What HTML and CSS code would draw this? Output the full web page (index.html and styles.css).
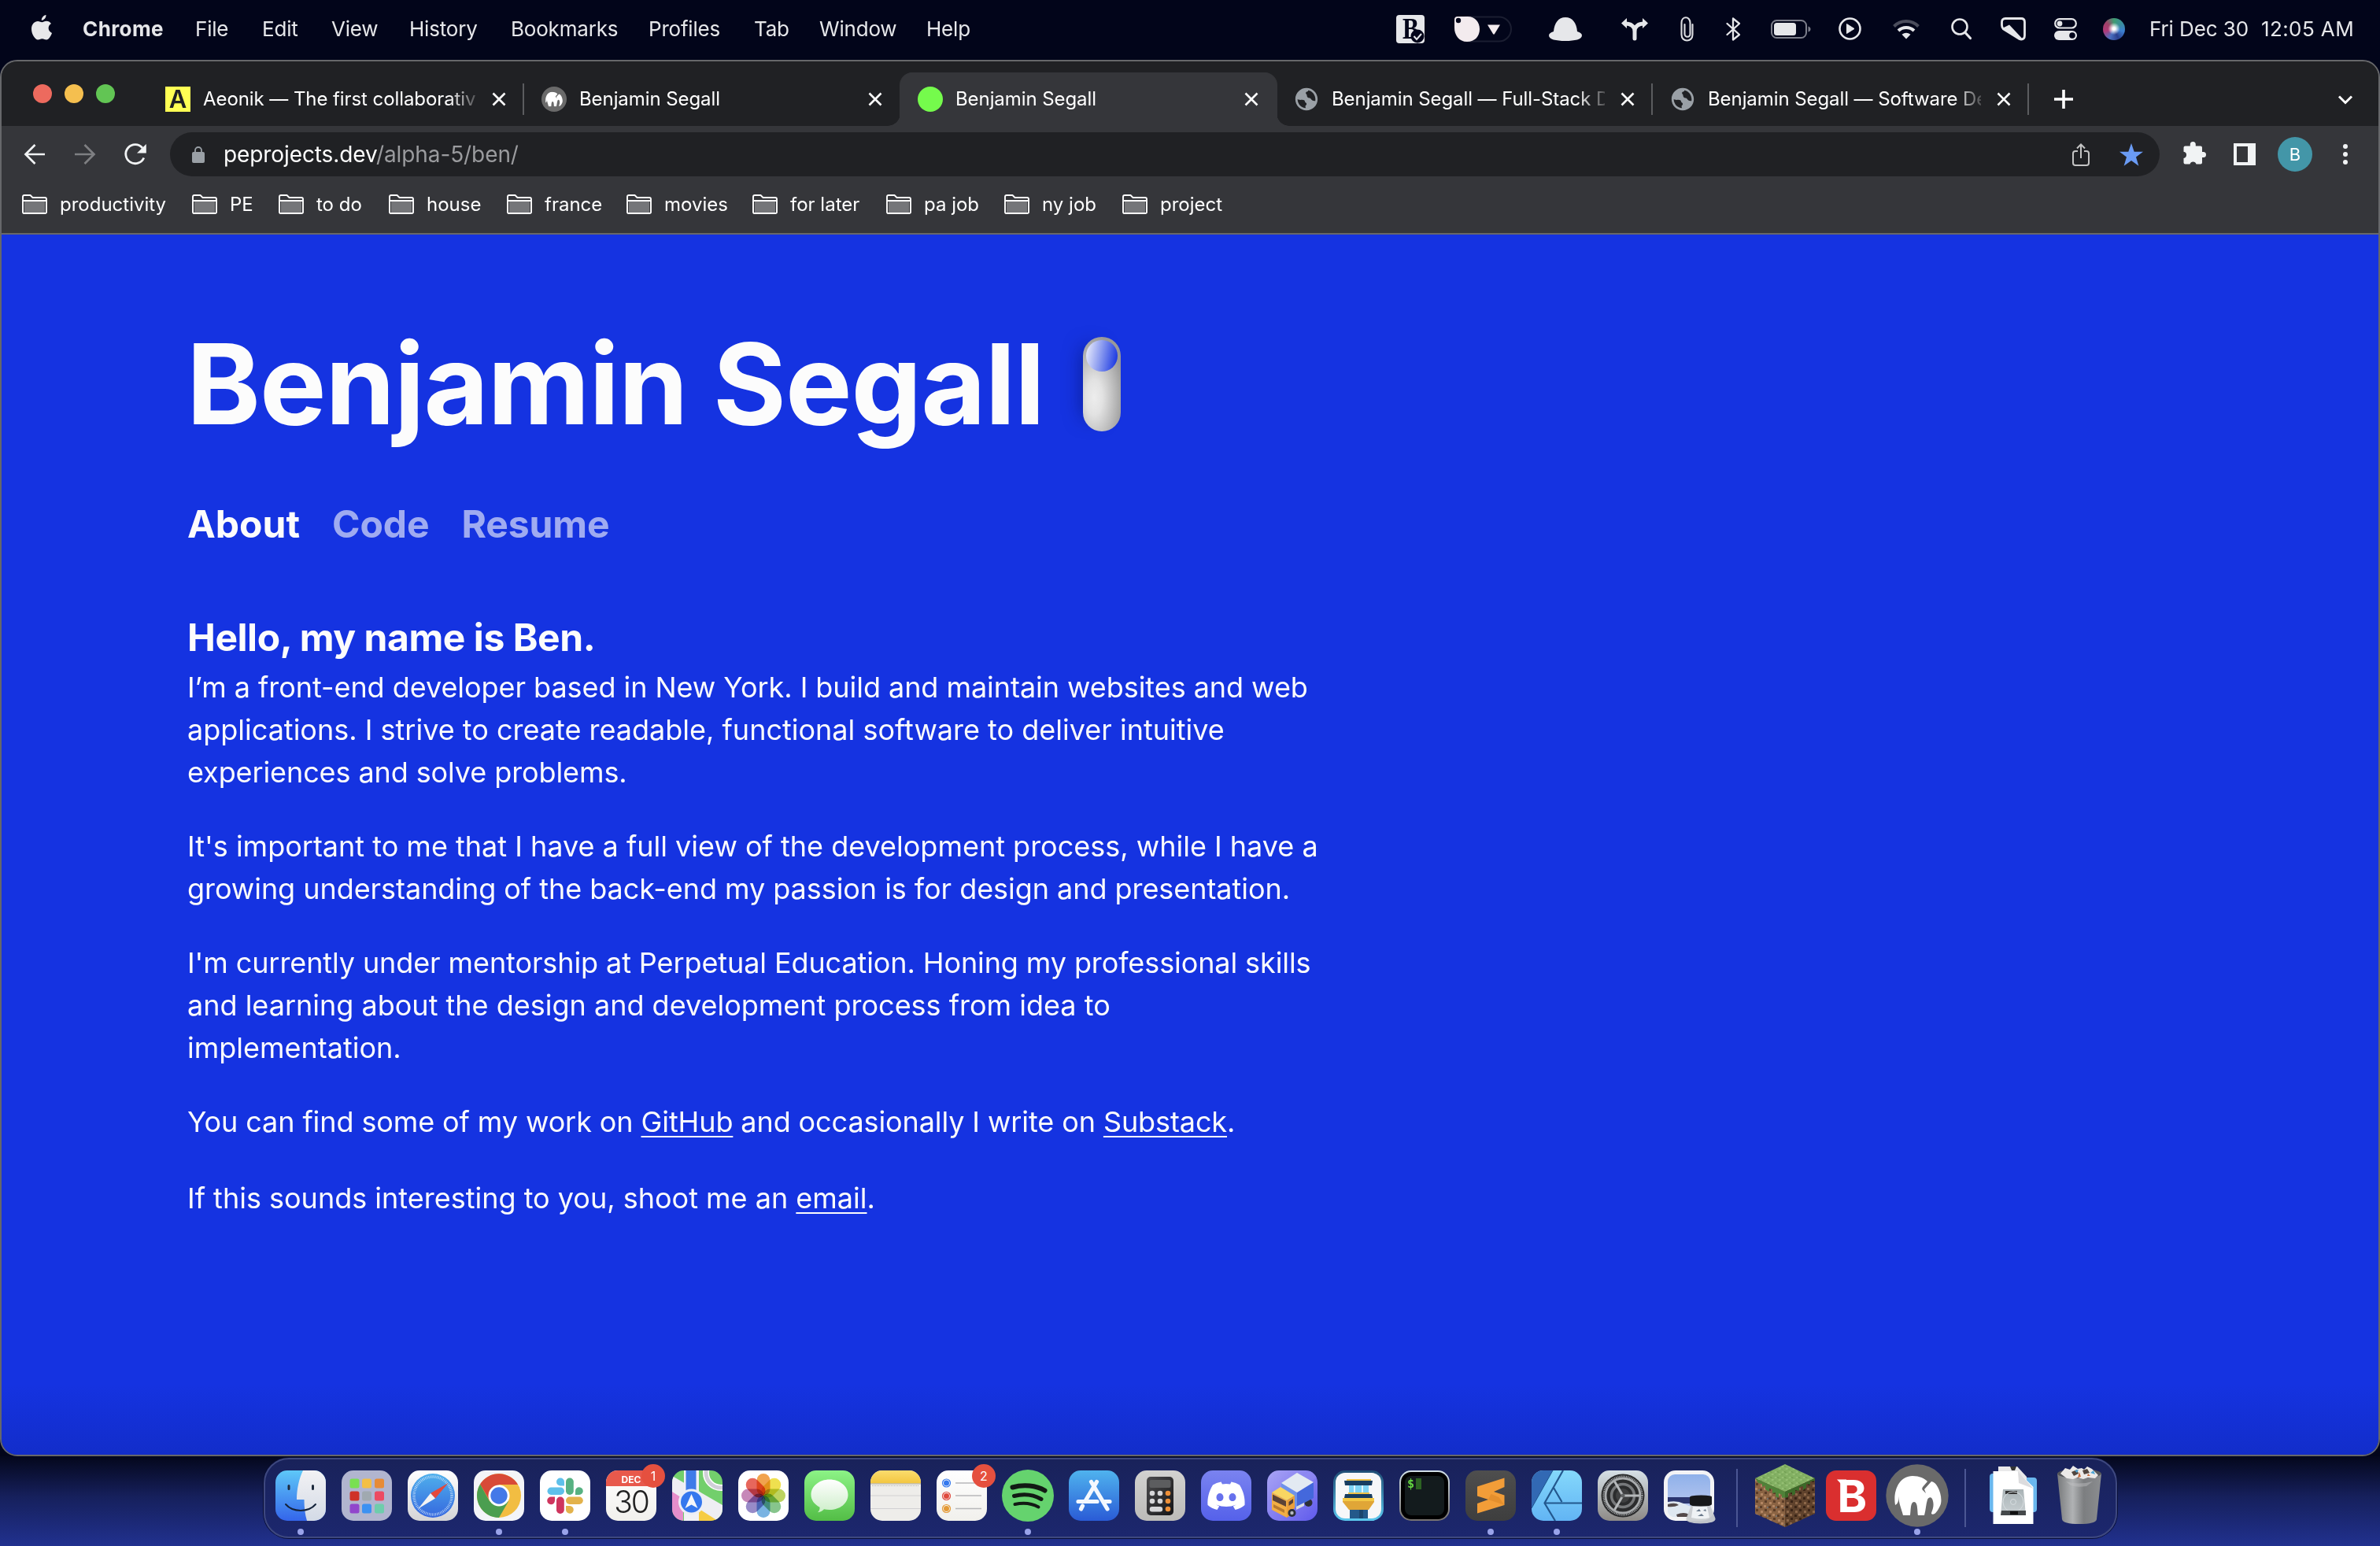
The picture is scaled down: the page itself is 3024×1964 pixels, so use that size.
FILE: index.html
```html
<!DOCTYPE html>
<html lang="en">
<head>
<meta charset="utf-8">
<title>Benjamin Segall</title>
<link rel="stylesheet" href="styles.css">
</head>
<body>
<svg width="0" height="0" class="defs" aria-hidden="true">
  <defs>
    <linearGradient id="gFinder" x1="0" y1="0" x2="0" y2="1"><stop offset="0" stop-color="#5ec8f8"/><stop offset="1" stop-color="#3465ea"/></linearGradient>
    <linearGradient id="gFinderR" x1="0" y1="0" x2="0" y2="1"><stop offset="0" stop-color="#f2f2f4"/><stop offset="1" stop-color="#d3dae6"/></linearGradient>
    <linearGradient id="gWhite" x1="0" y1="0" x2="0" y2="1"><stop offset="0" stop-color="#fff"/><stop offset="1" stop-color="#d4d4d6"/></linearGradient>
    <linearGradient id="gPaper" x1="0" y1="0" x2="0" y2="1"><stop offset="0" stop-color="#fff"/><stop offset="1" stop-color="#f1f0ec"/></linearGradient>
    <linearGradient id="gSafari" x1="0" y1="0" x2="0" y2="1"><stop offset="0" stop-color="#4fb0ec"/><stop offset="1" stop-color="#3567df"/></linearGradient>
    <linearGradient id="gMsg" x1="0" y1="0" x2="0" y2="1"><stop offset="0" stop-color="#8cf386"/><stop offset="1" stop-color="#53bd46"/></linearGradient>
    <linearGradient id="gBubble" x1="0" y1="0" x2="0" y2="1"><stop offset="0" stop-color="#fff"/><stop offset="1" stop-color="#cdeec9"/></linearGradient>
    <linearGradient id="gNotes" x1="0" y1="0" x2="0" y2="1"><stop offset="0" stop-color="#fbdc6e"/><stop offset="1" stop-color="#f3c63f"/></linearGradient>
    <linearGradient id="gStore" x1="0" y1="0" x2="0" y2="1"><stop offset="0" stop-color="#4fb3ee"/><stop offset="1" stop-color="#2a5bd6"/></linearGradient>
    <linearGradient id="gGrey" x1="0" y1="0" x2="0" y2="1"><stop offset="0" stop-color="#d2d2d0"/><stop offset="1" stop-color="#bcbbb8"/></linearGradient>
    <linearGradient id="gCalc" x1="0" y1="0" x2="1" y2="1"><stop offset="0" stop-color="#4c4c4e"/><stop offset="1" stop-color="#151517"/></linearGradient>
    <linearGradient id="gDiscord" x1="0" y1="0" x2="0" y2="1"><stop offset="0" stop-color="#7a83f0"/><stop offset="1" stop-color="#5561ea"/></linearGradient>
    <linearGradient id="gTruck" x1="0" y1="0" x2="1" y2="1"><stop offset="0" stop-color="#a9a4f5"/><stop offset="1" stop-color="#5f5aec"/></linearGradient>
    <linearGradient id="gTower" x1="0" y1="0" x2="0" y2="1"><stop offset="0" stop-color="#1f4d75"/><stop offset="1" stop-color="#5cc9ef"/></linearGradient>
    <linearGradient id="gTerm" x1="0" y1="0" x2="0" y2="1"><stop offset="0" stop-color="#d4e2ea"/><stop offset="1" stop-color="#75716f"/></linearGradient>
    <linearGradient id="gSubl" x1="0" y1="0" x2="0" y2="1"><stop offset="0" stop-color="#4e4e4e"/><stop offset="1" stop-color="#3e3e3e"/></linearGradient>
    <linearGradient id="gAff" x1="0" y1="0" x2="0" y2="1"><stop offset="0" stop-color="#84d8fb"/><stop offset="1" stop-color="#62b4f4"/></linearGradient>
    <linearGradient id="gPref" x1="0" y1="0" x2="0" y2="1"><stop offset="0" stop-color="#d6e0e6"/><stop offset="1" stop-color="#8d8a86"/></linearGradient>
    <linearGradient id="gSky" x1="0" y1="0" x2="0" y2="1"><stop offset="0" stop-color="#8fb1ea"/><stop offset="1" stop-color="#c3cdf0"/></linearGradient>
    <linearGradient id="gTrash" x1="0" y1="0" x2="1" y2="0"><stop offset="0" stop-color="#77797b"/><stop offset=".35" stop-color="#b0b2b4"/><stop offset=".6" stop-color="#7c7e80"/><stop offset="1" stop-color="#8b8d90"/></linearGradient>
    <linearGradient id="gDrive" x1="0" y1="0" x2="0" y2="1"><stop offset="0" stop-color="#a9b3b6"/><stop offset="1" stop-color="#c9d0d3"/></linearGradient>
    <clipPath id="sq"><rect width="64" height="64" rx="15"/></clipPath>
    <pattern id="grass" width="9" height="7" patternUnits="userSpaceOnUse"><rect width="9" height="7" fill="#83b063"/><path d="M0 2l3-1 2 1-3 1zM5 5l3-1 1 1-2 1z" fill="#9cc67a"/><path d="M4 1l3 1-1 1-3-1zM0 5l3 1H1z" fill="#6f9c50"/></pattern>
    <pattern id="dirt" width="11" height="11" patternUnits="userSpaceOnUse"><rect width="11" height="11" fill="#8a6343"/><path d="M0 1h3v3H0zM6 5h3v3H6z" fill="#5c3d28"/><path d="M5 0h3v3H5zM1 7h3v3H1z" fill="#b28562"/><path d="M9 2h2v2H9z" fill="#75706c"/></pattern>
    <pattern id="dirtD" width="11" height="11" patternUnits="userSpaceOnUse"><rect width="11" height="11" fill="#5f422c"/><path d="M0 1h3v3H0zM6 5h3v3H6z" fill="#3a2417"/><path d="M5 0h3v3H5zM1 7h3v3H1z" fill="#8b6649"/></pattern>
    <symbol id="close" viewBox="0 0 18 18"><path d="M1.500 1.500l15 15M16.500 1.500l-15 15" stroke="#fff" stroke-width="2.600" fill="none"/></symbol>
    <symbol id="folder" viewBox="0 0 32 26"><path d="M3 8h26v15H3z" fill="#757679"/><path d="M1 22.500V3Q1 1 3 1h7.500l3 3H29q2 0 2 2v16.500q0 1.500-2 1.500H3q-2 0-2-1.500zM1 8h30" fill="none" stroke="#fff" stroke-width="1.900"/></symbol>
    <symbol id="globe" viewBox="0 0 24 24"><path fill="#9aa0a6" d="M12 2C6.480 2 2 6.480 2 12s4.480 10 10 10 10-4.480 10-10S17.520 2 12 2zm7.900 11.500c-1.900.2-3.400-.5-4-1.800-.4-1.100-2.200-.6-3-1.500-.9-1.200-.2-2.200-.9-2.700-1.100-.6-.5-2.200.8-2.300 1.100-.1.400-1.200.7-1.200 3.700.6 6.400 3.900 6.500 8zM4 12c.2 0 1.500.8 3.600.6 1.900-.1 2.900.4 3 1.600.1 1.300 1.500.8 1.500 2.100 0 1.100-1.200 1.200-1.100 2.300.1 1 .4 1.200.4 1.400C7.400 19.800 4 16.400 4 12z"/></symbol>
    <symbol id="elephant" viewBox="0 0 60 52"><path fill="#fff" d="M1 38C-2 20 6 1 23 1c9 0 15 3 19 7l-6 7q-2 3 1 5l3 3-2-5 9-10q5 1 8 7c4 7 6 18 3 24-3 7-8 13-11 10 0-3 4-8 2-16-1-6-5-6-7-2-2 6-2 13-4 20H30c-1-5 0-17-5-17s-4 12-5 17H11C9 43 6 37 5 27c0 4 1 8-4 11z"/></symbol>
  </defs>
</svg>

<header class="menubar">
  <svg class="apple" viewBox="0 0 26 32"><path fill="#e8e8ea" d="M18.500 0c.3 3.700-2.700 6.800-5.700 6.800C12.500 3.700 15.300.5 18.500 0zM13.300 9.300c1.500 0 3-1.500 5.800-1.500 2.300 0 4.600 1.200 5.900 3.300-5 2.900-4.200 9.800 1 11.800-1.100 3.200-4 8.500-7 8.600-2.100 0-2.900-1.300-5.400-1.300-2.600 0-3.400 1.300-5.300 1.300C4.500 31.500 0 24.300 0 17.800 0 11.400 4.100 8 8 8c2.500 0 4 1.300 5.300 1.300z"/></svg>
  <nav class="menus">
    <span class="app-name">Chrome</span><span>File</span><span>Edit</span><span>View</span><span>History</span><span>Bookmarks</span><span>Profiles</span><span>Tab</span><span>Window</span><span>Help</span>
  </nav>
  <div class="status">
    <svg width="36" height="36" viewBox="0 0 36 36"><rect width="36" height="36" rx="4" fill="#e6e7ea"/><text transform="translate(8 30) scale(.82 1)" class="bd-letter">B</text><circle cx="27" cy="27" r="8.500" fill="#02051a"/><path d="M22.500 27l3.500 4 6-7" fill="none" stroke="#e6e7ea" stroke-width="2"/></svg>
    <svg width="73" height="34" viewBox="0 0 73 34"><rect x="1" y="1.500" width="71" height="31" rx="15.500" fill="none" stroke="#1b1e31" stroke-width="2"/><path d="M4 1h13c9 0 15 7 15 16s-6 16-16 16S0 25 0 15V5q0-4 4-4z" fill="#f3ebee"/><circle cx="5" cy="6" r="3.200" fill="#02051a"/><path d="M42 11.500h16l-7 11.500q-1 1.500-2 0z" fill="#f3ebee"/></svg>
    <svg width="42" height="32" viewBox="0 0 42 32"><path fill="#e6e7ea" d="M21 1c9 0 14 7 15 18 4 1 6 3 6 5 0 5-9 7-21 7S0 29 0 24c0-2 2-4 6-5C7 8 12 1 21 1z"/></svg>
    <svg width="34" height="28" viewBox="0 0 34 28"><path d="M17 26V17C17 10 12 7 5 7M17 17c0-7 5-10 12-10" fill="none" stroke="#e6e7ea" stroke-width="5" stroke-linecap="round"/><path d="M7 0v13L0 6.500zM27 0v13l7-6.500z" fill="#e6e7ea"/></svg>
    <svg width="17" height="32" viewBox="0 0 17 32"><path d="M15.500 10v13c0 10-14 10-14 0V8c0-9 11-9 11 0v14c0 5-7 5-7 0V10" fill="none" stroke="#dcdde1" stroke-width="2.100" stroke-linecap="round"/></svg>
    <svg width="19" height="30" viewBox="0 0 19 30"><path d="M1.500 8l15.500 14-8 6.500V1.500l8 6.500L1.500 22" fill="none" stroke="#e6e7ea" stroke-width="2.300" stroke-linejoin="round" stroke-linecap="round"/></svg>
    <svg width="51" height="24" viewBox="0 0 51 24"><rect x="1" y="1" width="44" height="22" rx="6.500" fill="none" stroke="#7c7e8a" stroke-width="2"/><rect x="4" y="4" width="28" height="16" rx="3.500" fill="#e6e7ea"/><path d="M47.500 8.500q3 1 3 3.500t-3 3.500z" fill="#7c7e8a"/></svg>
    <svg width="29" height="29" viewBox="0 0 29 29"><circle cx="14.500" cy="14.500" r="13" fill="none" stroke="#e6e7ea" stroke-width="2.600"/><path d="M10.500 8.500l9.500 6-9.500 6z" fill="#e6e7ea" stroke="#e6e7ea" stroke-linejoin="round"/></svg>
    <svg width="34" height="26" viewBox="0 0 34 26"><path d="M1.500 9.500a22 22 0 0131 0" fill="none" stroke="#4b4d5c" stroke-width="4"/><path d="M7 15a14.500 14.500 0 0120 0" fill="none" stroke="#e6e7ea" stroke-width="4"/><path d="M17 25.500l-5.500-5.800q5.500-4 11 0z" fill="#e6e7ea"/></svg>
    <svg width="26" height="27" viewBox="0 0 26 27"><circle cx="11" cy="11" r="9.500" fill="none" stroke="#e6e7ea" stroke-width="2.600"/><path d="M18 18.500l6.500 7" stroke="#e6e7ea" stroke-width="3.200" stroke-linecap="round"/></svg>
    <svg width="32" height="29" viewBox="0 0 32 29"><path d="M6 1.500h20q4.500 0 4.500 4.500v17q0 5-4.500 5-2.500 0-4.500-2L3.500 15q-2-2-2-5V6Q1.500 1.500 6 1.500z" fill="none" stroke="#e6e7ea" stroke-width="2.800"/><path d="M3 13.500l8-4 16 17q-3 2-6 0z" fill="#e6e7ea"/></svg>
    <svg width="29" height="28" viewBox="0 0 29 28"><rect x="1.200" y="1.200" width="26.600" height="11.300" rx="5.600" fill="none" stroke="#e6e7ea" stroke-width="2.200"/><circle cx="7" cy="7" r="3.400" fill="#e6e7ea"/><rect y="16" width="29" height="12" rx="6" fill="#e6e7ea"/><circle cx="23" cy="22" r="3.800" fill="#02051a"/></svg>
    <i class="siri"></i>
    <span>Fri Dec 30</span><span class="time">12:05 AM</span>
  </div>
</header>

<main class="window">
  <div class="tabstrip">
    <div class="lights"><i class="red"></i><i class="amber"></i><i class="green"></i></div>
    <div class="tab sep"><b class="fav-a">A</b><span class="tab-title">Aeonik — The first collaborative</span><svg class="x"><use href="#close"/></svg></div>
    <div class="tab"><i class="fav-e"><svg viewBox="0 0 60 52"><use href="#elephant"/></svg></i><span class="tab-title">Benjamin Segall</span><svg class="x"><use href="#close"/></svg></div>
    <div class="tab active"><i class="fav-g"></i><span class="tab-title">Benjamin Segall</span><svg class="x"><use href="#close"/></svg></div>
    <div class="tab sep"><svg class="fav-w"><use href="#globe"/></svg><span class="tab-title">Benjamin Segall — Full-Stack D</span><svg class="x"><use href="#close"/></svg></div>
    <div class="tab sep"><svg class="fav-w"><use href="#globe"/></svg><span class="tab-title">Benjamin Segall — Software De</span><svg class="x"><use href="#close"/></svg></div>
    <svg class="plus" viewBox="0 0 24 24"><path d="M12 0v24M0 12h24" stroke="#fff" stroke-width="3.600"/></svg>
    <svg class="chev" viewBox="0 0 18 12"><path d="M1 1.500l8 8 8-8" fill="none" stroke="#fff" stroke-width="3"/></svg>
  </div>
  <div class="toolbar">
    <svg width="28" height="28" viewBox="0 0 28 28"><path d="M27 14H3M14.500 2L2.500 14l12 12" fill="none" stroke="#f1f3f4" stroke-width="2.700"/></svg>
    <svg width="28" height="28" viewBox="0 0 28 28"><path d="M1 14h24M13.500 2l12 12-12 12" fill="none" stroke="#7e7f82" stroke-width="2.700"/></svg>
    <svg width="28" height="28" viewBox="0 0 28 28"><path d="M24.800 18.500A12 12 0 1123 6" fill="none" stroke="#f1f3f4" stroke-width="2.800"/><path d="M27.800 1v11.500H16z" fill="#f1f3f4"/></svg>
    <div class="omnibox">
      <svg class="lock" viewBox="0 0 16 21"><rect y="7" width="16" height="14" rx="2" fill="#9aa0a6"/><path d="M4 8V5a4 4 0 018 0v3" fill="none" stroke="#9aa0a6" stroke-width="1.800"/></svg>
      <span class="url">peprojects.dev<em>/alpha-5/ben/</em></span>
      <svg class="share" viewBox="0 0 22 29"><path d="M7 10H4q-3 0-3 3v12q0 3 3 3h14q3 0 3-3V13q0-3-3-3h-3M11 19V2M6 6.500L11 1.500l5 5" fill="none" stroke="#c4c4c4" stroke-width="2"/></svg>
      <svg class="star" viewBox="0 0 30 29"><path d="M15 0l3.700 10.700H30l-9 6.900 3.400 11.200L15 22l-9.400 6.800L9 17.600 0 10.700h11.300z" fill="#6a9bf4"/></svg>
    </div>
    <svg class="puzzle" viewBox="0 0 29 29"><path d="M2.500 5.500h6.300V3.500a3.500 3.500 0 017 0v2H22q2 0 2 2V13h1.500a3.500 3.500 0 010 7H24v6.500q0 2-2 2h-5.500a4.200 4.200 0 00-8 0H2.500q-2 0-2-2V21a4.200 4.200 0 000-8.300V7.500q0-2 2-2z" fill="#f1f3f4"/></svg>
    <svg class="panel" viewBox="0 0 28 28"><path fill="#f1f3f4" fill-rule="evenodd" d="M0 0h28v28H0zM4 4v20h14V4z"/></svg>
    <span class="avatar">B</span>
    <svg class="dots" viewBox="0 0 6 26"><circle cx="3" cy="3" r="3"/><circle cx="3" cy="13" r="3"/><circle cx="3" cy="23" r="3"/></svg>
  </div>
  <nav class="bookmarks">
    <a><svg><use href="#folder"/></svg>productivity</a><a><svg><use href="#folder"/></svg>PE</a><a><svg><use href="#folder"/></svg>to do</a><a><svg><use href="#folder"/></svg>house</a><a><svg><use href="#folder"/></svg>france</a><a><svg><use href="#folder"/></svg>movies</a><a><svg><use href="#folder"/></svg>for later</a><a><svg><use href="#folder"/></svg>pa job</a><a><svg><use href="#folder"/></svg>ny job</a><a><svg><use href="#folder"/></svg>project</a>
  </nav>
  <article class="page">
    <div class="title-row"><h1>Benjamin Segall</h1><span class="toggle"><i></i></span></div>
    <nav class="site-nav"><a class="on">About</a><a>Code</a><a>Resume</a></nav>
    <h2>Hello, my name is Ben.</h2>
    <p><span class="snug">I’m a front-end developer based in New York. I build and maintain websites and web</span><br>applications. I strive to create readable, functional software to deliver intuitive<br><span class="tight">experiences and solve problems.</span></p>
    <p>It's important to me that I have a full view of the development process, while I have a<br><span class="snug">growing understanding of the back-end my passion is for design and presentation.</span></p>
    <p><span class="tight">I'm currently under mentorship at Perpetual Education. Honing my professional skills</span><br>and learning about the design and development process from idea to<br>implementation.</p>
    <p class="tight">You can find some of my work on <u>GitHub</u> and occasionally I write on <u>Substack</u>.</p>
    <p class="last">If this sounds interesting to you, shoot me an <u>email</u>.</p>
  </article>
</main>

<footer class="desk">
  <div class="dock">
    <div class="cell run"><svg viewBox="0 0 64 64"><g clip-path="url(#sq)"><rect width="64" height="64" fill="url(#gFinder)"/><path d="M35 0C30 10 27 24 27 37h9.500c0 10 1 19 3.500 27h24V0z" fill="url(#gFinderR)"/></g><path d="M17 19.500v4M47.500 19.500v4" stroke="#1d2a3c" stroke-width="3" stroke-linecap="round"/><path d="M13 43c9 10.500 29 10.500 38 0" fill="none" stroke="#14233b" stroke-width="2" stroke-linecap="round"/></svg></div>
    <div class="cell"><svg viewBox="0 0 64 64"><rect width="64" height="64" rx="15" fill="#b1b5cf"/><g><rect x="10.500" y="10.500" width="12" height="12" rx="2.500" fill="#79e052"/><rect x="26" y="10.500" width="12" height="12" rx="2.500" fill="#f4bf45"/><rect x="42" y="10.500" width="12" height="12" rx="2.500" fill="#e78b36"/><rect x="10.500" y="26.500" width="12" height="12" rx="2.500" fill="#cf3228"/><rect x="26" y="26.500" width="12" height="12" rx="2.500" fill="#a0a9b0"/><rect x="42" y="26.500" width="12" height="12" rx="2.500" fill="#ec4a62"/><rect x="10.500" y="42.500" width="12" height="12" rx="2.500" fill="#9146cc"/><rect x="26" y="42.500" width="12" height="12" rx="2.500" fill="#3c91f2"/><rect x="42" y="42.500" width="12" height="12" rx="2.500" fill="#6ecdac"/></g></svg></div>
    <div class="cell"><svg viewBox="0 0 64 64"><rect width="64" height="64" rx="15" fill="url(#gWhite)"/><circle cx="32" cy="32" r="28" fill="url(#gSafari)"/><circle cx="32" cy="32" r="24" fill="none" stroke="#d5e8fa" stroke-width="3.500" stroke-dasharray=".7 1.394"/><path d="M51.500 16L35 35.500 29 29z" fill="#e4493c"/><path d="M13.500 48.500L29 29l6 6.500z" fill="#f3f3f3"/></svg></div>
    <div class="cell run"><svg viewBox="0 0 64 64"><rect width="64" height="64" rx="15" fill="#f3f4f8"/><circle cx="32" cy="32" r="28" fill="#f2bd42"/><path d="M8 17.600A28 28 0 0156 18H32L20 38z" fill="#d84a38"/><path d="M8 17.600A28 28 0 0032 60l12.200-21L32 45 20 39z" fill="#4b9e50"/><circle cx="32" cy="32" r="13.500" fill="#fff"/><circle cx="32" cy="32" r="10.700" fill="#4479e8"/></svg></div>
    <div class="cell run"><svg viewBox="0 0 64 64"><rect width="64" height="64" rx="15" fill="#fff"/><g fill="#5fc0ea"><path d="M31 19.500h-5a5 5 0 115-5z"/><rect x="9.500" y="21.500" width="21.500" height="9.500" rx="4.700"/></g><g fill="#57b182"><rect x="33" y="9.500" width="9.800" height="21.500" rx="4.800"/><path d="M45 31v-5a4.900 4.900 0 114.900 5z"/></g><g fill="#e3b24b"><rect x="33" y="33.500" width="21.800" height="9.500" rx="4.700"/><path d="M33 45h5a4.900 4.900 0 11-5 4.900z"/></g><g fill="#cf355d"><rect x="21" y="33.500" width="9.800" height="21.500" rx="4.800"/><path d="M19 33.500v5a4.900 4.900 0 11-4.900-5z"/></g></svg></div>
    <div class="cell"><svg viewBox="0 0 64 64"><g clip-path="url(#sq)"><rect width="64" height="64" fill="url(#gPaper)"/><rect width="64" height="20" fill="#e8594c"/></g><text x="32" y="15.500" class="cal-month">DEC</text><text x="32" y="54" class="cal-day">30</text></svg><b class="badge">1</b></div>
    <div class="cell"><svg viewBox="0 0 64 64"><g clip-path="url(#sq)"><rect width="64" height="64" fill="#72cf6c"/><path d="M0 26l14 8v30H0z" fill="#e58ecb"/><path d="M34 64V48l26 16z" fill="#f6cc43"/><path d="M0 7l64 37v20h-6L0 27z" fill="#eeeef3"/><path d="M15 0h19v64H15z" fill="#f1f1f5"/><path d="M17.500 0h13v26h-13z" fill="#3f7be8"/><circle cx="62" cy="3" r="19" fill="none" stroke="#fff" stroke-width="8"/><circle cx="62" cy="3" r="19" fill="none" stroke="#cfcfd8" stroke-width="5"/></g><circle cx="24.500" cy="40" r="16.500" fill="#eceef6"/><circle cx="24.500" cy="40" r="13.500" fill="#3577ee"/><path d="M24.500 30l8 18-8-4.500-8 4.500z" fill="#f5f6fa"/></svg></div>
    <div class="cell"><svg viewBox="0 0 64 64"><rect width="64" height="64" rx="15" fill="#fff"/><g class="petals"><rect x="23.500" y="4" width="17" height="28" rx="8.500" fill="#f0993a"/><rect x="23.500" y="4" width="17" height="28" rx="8.500" fill="#eedd3c" transform="rotate(45 32 32)"/><rect x="23.500" y="4" width="17" height="28" rx="8.500" fill="#b5cf4e" transform="rotate(90 32 32)"/><rect x="23.500" y="4" width="17" height="28" rx="8.500" fill="#7abf80" transform="rotate(135 32 32)"/><rect x="23.500" y="4" width="17" height="28" rx="8.500" fill="#6aabdf" transform="rotate(180 32 32)"/><rect x="23.500" y="4" width="17" height="28" rx="8.500" fill="#8c7ec2" transform="rotate(225 32 32)"/><rect x="23.500" y="4" width="17" height="28" rx="8.500" fill="#c07bb0" transform="rotate(270 32 32)"/><rect x="23.500" y="4" width="17" height="28" rx="8.500" fill="#e5564a" transform="rotate(315 32 32)"/></g></svg></div>
    <div class="cell"><svg viewBox="0 0 64 64"><rect width="64" height="64" rx="15" fill="url(#gMsg)"/><path d="M32 11.500c13 0 23.500 8.500 23.500 19.500S45 50 32 50q-4 0-7-.8-3 3.500-8 4 3-3 2.500-6.500C12.500 43 8.500 37.500 8.500 31 8.500 20 19 11.500 32 11.500z" fill="url(#gBubble)"/></svg></div>
    <div class="cell"><svg viewBox="0 0 64 64"><g clip-path="url(#sq)"><rect width="64" height="64" fill="#eeedea"/><rect width="64" height="16.500" fill="url(#gNotes)"/><path d="M0 17h64" stroke="#a9a7a0" stroke-width="1.200"/><path d="M0 32h64M0 48.500h64" stroke="#d2d1d2" stroke-width="1.200"/><path d="M2 19.500h60" stroke="#b9b7b2" stroke-dasharray="1 1"/></g></svg></div>
    <div class="cell"><svg viewBox="0 0 64 64"><rect width="64" height="64" rx="15" fill="url(#gPaper)"/><g fill="none" stroke-width="1.200"><circle cx="12.500" cy="16" r="5" stroke="#3478ee"/><circle cx="12.500" cy="32.500" r="5" stroke="#df4a3e"/><circle cx="12.500" cy="48.500" r="5" stroke="#e49a37"/></g><circle cx="12.500" cy="16" r="3.500" fill="#3478ee"/><circle cx="12.500" cy="32.500" r="3.500" fill="#df4a3e"/><circle cx="12.500" cy="48.500" r="3.500" fill="#e49a37"/><path d="M24 16h33M24 32h33M24 48.500h33" stroke="#b8b8ba" stroke-width="1.500"/></svg><b class="badge">2</b></div>
    <div class="cell run"><svg viewBox="0 0 64 64"><circle cx="32" cy="32" r="33" fill="#65d36e"/><g fill="none" stroke="#121a14" stroke-linecap="round"><path d="M12.500 21.500c14-4 30-2.500 41 4" stroke-width="6"/><path d="M14.500 32.500c12-3 24-2 34.500 4" stroke-width="5"/><path d="M15.500 43c11-2.500 21-1.500 30 3.500" stroke-width="4"/></g></svg></div>
    <div class="cell"><svg viewBox="0 0 64 64"><rect width="64" height="64" rx="15" fill="url(#gStore)"/><g fill="none" stroke="#f4f8fe" stroke-linecap="round" stroke-width="5.200"><path d="M28.500 14.500L49 49M35.500 14.500L21.500 38M17.500 45l-2 4M12 39.500h24M46 39.500h6"/></g></svg></div>
    <div class="cell"><svg viewBox="0 0 64 64"><rect width="64" height="64" rx="15" fill="url(#gGrey)"/><rect x="15" y="8" width="34" height="49" rx="5" fill="url(#gCalc)"/><rect x="18.500" y="12" width="27" height="10" rx="2" fill="#5c5d5f"/><g fill="#d6d6d8"><circle cx="22" cy="29" r="3.300"/><circle cx="32" cy="29" r="3.300"/><circle cx="22" cy="39" r="3.300"/><circle cx="32" cy="39" r="3.300"/><rect x="18.700" y="46" width="16.500" height="6.500" rx="3.200"/></g><g fill="#ee9038"><circle cx="42" cy="29" r="3.300"/><circle cx="42" cy="39" r="3.300"/><circle cx="42" cy="49" r="3.300"/></g></svg></div>
    <div class="cell"><svg viewBox="0 0 64 64"><rect width="64" height="64" rx="15" fill="url(#gDiscord)"/><path fill="#fff" fill-rule="evenodd" d="M25.500 14.500l1.500 3q5-1 10 0l1.500-3q6 .8 10.500 4c5 8 7.200 17 6.500 25.500q-5 4.500-12 6l-2.700-4.500 4-2q-12.500 5-25.600 0l4 2-2.700 4.500q-7-1.500-12-6C7.800 35.500 10 26.500 15 18.500q4.500-3.200 10.500-4zM24 29c-2.500 0-4.500 2-4.500 5s2 5 4.500 5 4.500-2 4.500-5-2-5-4.500-5zm16 0c-2.500 0-4.500 2-4.500 5s2 5 4.500 5 4.500-2 4.500-5-2-5-4.500-5z"/></svg></div>
    <div class="cell"><svg viewBox="0 0 64 64"><g clip-path="url(#sq)"><rect width="64" height="64" fill="url(#gTruck)"/><path d="M0 40L55 0h9v8L0 54z" fill="#8f8bf3" opacity=".6"/></g><circle cx="52.500" cy="41" r="5" fill="#2c3038"/><path d="M18 16l20 12v20L18 36z" fill="#6f93ea"/><path d="M38 28l21-13v20L38 46z" fill="#4468dc"/><path d="M18 16L38 3l21 12-21 13z" fill="#e3eaf2"/><path d="M37 46l10-5v4l-10 5z" fill="#d8dce4"/><path d="M6 28l11-7 18 11-10 6z" fill="#f9d662"/><path d="M6 28l19 10v22L6 50z" fill="#f2ae44"/><path d="M25 38l10-6v16l-4 2-3 8-3 2z" fill="#eba03a"/><path d="M7 30.500L24 39v7L7 38z" fill="#5b4337"/><path d="M27.500 40l5.500-4v5l-5.500 4z" fill="#5b4337"/><path d="M8 43l14 7v4L8 47z" fill="#b97a2e"/><circle cx="31.500" cy="54" r="5" fill="#2c3038"/><circle cx="31.500" cy="54" r="2.200" fill="#b6bac0"/></svg></div>
    <div class="cell"><svg viewBox="0 0 64 64"><rect width="64" height="64" rx="15" fill="url(#gTower)"/><rect x="3" y="3" width="58" height="58" rx="12" fill="#f6f7f9"/><path d="M21 50h23v11H21z" fill="#24598a"/><path d="M33 50h5v11h-5z" fill="#1b466e"/><path d="M17 11h31v3H17z" fill="#eec349"/><path d="M14 13h36l-1 6H15z" fill="#173d61"/><path d="M20 19h25v9H20z" fill="#7fd4f5"/><path d="M27 19v9M37 19v9" stroke="#fff" stroke-width="1.500"/><path d="M19 28h27v2H19z" fill="#eec349"/><path d="M15 30h34l1 5H14z" fill="#173d61"/><path d="M12 35h40v5l-7 10H20l-8-10z" fill="#e0a637"/><path d="M12 35h40v4H12z" fill="#f3c844"/></svg></div>
    <div class="cell"><svg viewBox="0 0 64 64"><rect width="64" height="64" rx="15" fill="url(#gTerm)"/><rect x="2" y="2" width="60" height="60" rx="13" fill="#000"/><rect x="7" y="7" width="50" height="50" rx="8" fill="#131b1d"/><text x="10" y="22" class="prompt">$</text><rect x="21" y="10" width="7" height="14" fill="#2d6322"/></svg></div>
    <div class="cell run"><svg viewBox="0 0 64 64"><rect width="64" height="64" rx="15" fill="url(#gSubl)"/><path d="M15 20.500L49.500 9.500V21L36 27l13.500 4.500V44L15 54.500V42l14-5-14-4.500z" fill="#f29d38"/><path d="M29 37l20.500 7-7-10-10-4z" fill="#d98425" opacity=".55"/></svg></div>
    <div class="cell run"><svg viewBox="0 0 64 64"><g clip-path="url(#sq)"><rect width="64" height="64" fill="url(#gAff)"/><path d="M0 0h27L0 48z" fill="#3269b4"/><g fill="none" stroke="#23588e" stroke-width="2.200"><path d="M40 0L16.500 41.500 30 64M16.500 41.500H64M28 22l10.500 18"/></g><path d="M27 0L0 48" stroke="#1f548f"/></g></svg></div>
    <div class="cell"><svg viewBox="0 0 64 64"><rect width="64" height="64" rx="15" fill="url(#gPref)"/><circle cx="32" cy="32" r="27.500" fill="#2b2c2d"/><circle cx="32" cy="32" r="24.500" fill="none" stroke="#a3a6a8" stroke-width="2" stroke-dasharray="1.200 1"/><circle cx="32" cy="32" r="22" fill="none" stroke="#a9acae" stroke-width="2.800"/><circle cx="32" cy="32" r="14.500" fill="none" stroke="#77797b" stroke-width="3.500"/><circle cx="32" cy="32" r="9" fill="#3f4041"/><path d="M32 32h21M32 32L21.500 14M32 32L21.500 50" stroke="#b5b8ba" stroke-width="3"/><circle cx="32" cy="32" r="2.500" fill="#606263"/></svg></div>
    <div class="cell"><svg viewBox="0 0 64 64"><rect width="64" height="64" rx="15" fill="#f3f3f5"/><rect x="5" y="5" width="54" height="54" rx="9" fill="url(#gSky)"/><path d="M5 34h54v8H5z" fill="#2b356e"/><path d="M5 40q12-2 20 2t12 4l-2 13H14q-9 0-9-9z" fill="#dfe8f1"/><path d="M5 43q10-3 14 1-6 3-14 2zM16 56q10-4 16 0l-2 3H17z" fill="#53494a"/><path d="M35 44h24l6.500 17q1 6-19 6.500-19-.5-18-6.500z" fill="#c9ccd0" opacity=".95"/><path d="M37 46h18l3 14q-9 3-23 0z" fill="#eff2f5"/><path d="M41 52l4-3 2 3zM43 58l5-3 3 3zM50 51l3-2 1 3z" fill="#6b7a8c"/><path d="M33 34q0-2.500 14.500-2.500T61 34v9q0 2.500-14 2.500T33 43z" fill="#17181a"/></svg></div>
    <i class="rule"></i>
    <div class="cell"><svg viewBox="0 0 64 64"><path d="M32-8L70 10 32 28-6 10z" fill="url(#grass)"/><path d="M-6 10l38 17v45L-6 55z" fill="url(#dirt)"/><path d="M70 10L32 27v45l38-17z" fill="url(#dirtD)"/><path d="M-6 10l38 17v7l-4 1v-4l-4-2v6l-4-2v-5l-4 1v-5l-4-1v4l-5-3v-5l-4 2v-4l-5-1z" fill="#4f8238"/><path d="M70 10L32 27v8l4-1v-5l5-1v4l4-2v-5l5 1v-5l5-1v5l4-3v-5l5 1v-4l6-1z" fill="#3c6a29"/></svg></div>
    <div class="cell"><svg viewBox="0 0 64 64"><rect width="64" height="64" rx="13" fill="#da2f2f"/><text x="14.500" y="53" class="bit-letter">B</text><path d="M14 11.500h12V18h-6z" fill="#fff"/></svg></div>
    <div class="cell run"><svg viewBox="0 0 64 64"><circle cx="32" cy="32" r="39.700" fill="#6a6a6a"/><svg x="3" y="6" width="60" height="52" viewBox="0 0 60 52"><use href="#elephant"/></svg></svg></div>
    <i class="rule"></i>
    <div class="cell"><svg viewBox="0 0 64 64"><path d="M2 8q0-4 4-4h20l4 5h28q4 0 4 4v36q0 4-4 4H6q-4 0-4-4z" fill="#69b7ee"/><path d="M13-5h24l12 13v20H13z" fill="#e9e9ea"/><path d="M28-5h8l-2 5h-4z" fill="#333"/><path d="M6.500 1h31L57.500 21v47h-51z" fill="#fff"/><path d="M38 1l1 15 18.500 7z" fill="#dcdcde"/><path d="M19 24h26l3 33H16z" fill="url(#gDrive)"/><rect x="22" y="26" width="15" height="4" fill="#333"/><circle cx="32" cy="40" r="13" fill="none" stroke="#d6dde0"/><circle cx="32" cy="40" r="3.500" fill="none" stroke="#d6dde0"/><path d="M17 51h31v6H16z" fill="#45494b"/><path d="M28 52h10v4H28z" fill="#111"/></svg></div>
    <div class="cell"><svg viewBox="0 0 64 64"><path d="M4 4h56l-6 58q-1 6-22 6t-22-6z" fill="url(#gTrash)"/><ellipse cx="32" cy="4" rx="28" ry="6" fill="#54565a"/><path d="M8 4l6-7 6 2 4-5 6 4 5-1 3 2 4-4 6 3 5 5 3 3-4 4-9-1-6 2-7-2-6 2-8-1z" fill="#eceae8"/><path d="M22 2l7-3 2 5-6 3zM36 0l6-2 3 5-7 2z" fill="#51463f"/><path d="M26 0l5-1-2 4zM46 3l4-3 2 5z" fill="#4ea7d8"/><path d="M32 2l2 6-4 1zM43 4l3 3h-4z" fill="#c9693a"/><path d="M15 14q16 5 34 0l-8 6q-12 2-20-1z" fill="#c0c2c4" opacity=".45"/></svg></div>
  </div>
</footer>
</body>
</html>
```
FILE: styles.css
```css
* { box-sizing: border-box; }
body {
  margin: 0;
  width: 3024px;
  height: 1964px;
  overflow: hidden;
  display: flex;
  flex-direction: column;
  background: #02051a;
  font-family: Inter, "Liberation Sans", sans-serif;
  color: #fff;
}
svg { display: block; overflow: visible; flex: none; }
.defs { position: absolute; }
i, em { font-style: normal; }

/* menu bar */
.menubar {
  height: 76px;
  flex: none;
  display: flex;
  align-items: center;
  padding-left: 40px;
  font-size: 26px;
  color: #e6e7ea;
  white-space: nowrap;
}
.apple { width: 26px; height: 32px; margin: -7px 39px 0 0; }
.menus {
  width: 1669px;
  display: grid;
  grid-template-columns: 143px 85px 88px 99px 129px 175px 134px 83px 136px auto;
  letter-spacing: -0.2px;
  padding-bottom: 3px;
}
.app-name { font-weight: 700; letter-spacing: 0.4px; }
.status {
  display: grid;
  grid-template-columns: 74px 120px 92px 75px 58px 57px 86px 69px 74px 63px 68px 62px 59px 142px auto;
  align-items: center;
  letter-spacing: -0.1px;
  padding-bottom: 3px;
}
.time { letter-spacing: 0.4px; }
.bd-letter { font: 700 38px "Liberation Serif", serif; fill: #02051a; }
.siri {
  width: 28px;
  height: 28px;
  border-radius: 50%;
  background:
    radial-gradient(circle at 50% 48%, #fff 0 8%, rgba(255,255,255,0) 38%),
    conic-gradient(#3f9c72, #3a8f9a, #3c7fd0, #2a3f8e, #4a6fc0, #b03a78, #a04068, #3f9c72);
}

/* browser window */
.window {
  height: 1774px;
  flex: none;
  border: 2px solid #66676a;
  border-radius: 22px;
  overflow: hidden;
  background: #35363a;
  display: flex;
  flex-direction: column;
}
.tabstrip {
  height: 82px;
  flex: none;
  display: flex;
  background: #202124;
  font-size: 24px;
}
.lights { width: 186px; display: flex; gap: 16px; padding: 29px 0 0 40px; }
.lights i { width: 24px; height: 24px; border-radius: 50%; }
.red { background: #ed6a5e; }
.amber { background: #f5bf4f; }
.green { background: #62c554; }
.tab {
  width: 478px;
  flex: none;
  height: 68px;
  margin-top: 14px;
  display: flex;
  align-items: center;
  padding-left: 22px;
  position: relative;
}
.tab.sep::after {
  content: "";
  width: 2px;
  height: 40px;
  background: #5b5c5f;
  margin-left: auto;
}
.tab.active { background: #35363a; border-radius: 16px 16px 0 0; box-shadow: -1px 0 #35363a, 1px 0 #35363a; }
.tab.active::before, .tab.active::after {
  content: "";
  position: absolute;
  bottom: 0;
  width: 16px;
  height: 16px;
}
.tab.active::before { left: -16px; background: radial-gradient(circle at 0 0, transparent 15.500px, #35363a 16px); }
.tab.active::after { right: -16px; background: radial-gradient(circle at 100% 0, transparent 15.500px, #35363a 16px); }
.fav-a, .fav-e, .fav-g { width: 32px; height: 32px; flex: none; }
.fav-a { background: #ffff54; color: #202124; font: 600 31px/32px Inter, sans-serif; text-align: center; }
.fav-e { border-radius: 50%; background: #6a6a6a; display: grid; place-items: center; }
.fav-e svg { width: 22px; height: 20px; }
.fav-g { border-radius: 50%; background: #75fb4c; }
.fav-w { width: 34px; height: 34px; margin: 0 -1px; }
.tab-title {
  width: 347px;
  margin-left: 16px;
  padding-bottom: 2px;
  overflow: hidden;
  white-space: nowrap;
  letter-spacing: -0.08px;
  -webkit-mask-image: linear-gradient(90deg, #000 312px, transparent 356px);
  mask-image: linear-gradient(90deg, #000 312px, transparent 356px);
}
.x { width: 18px; height: 18px; margin-left: 20px; }
.plus { width: 24px; height: 24px; margin: 36px 0 0 32px; }
.chev { width: 18px; height: 12px; margin: 43px 0 0 337px; }

.toolbar { height: 72px; flex: none; display: flex; align-items: center; padding-left: 28px; gap: 36px; }
.omnibox {
  width: 2528px;
  height: 56px;
  margin-left: -6px;
  flex: none;
  border-radius: 28px;
  background: #202124;
  display: flex;
  align-items: center;
  padding-left: 28px;
}
.lock { width: 16px; height: 21px; }
.url { width: 2349px; margin-left: 24px; font-size: 28px; letter-spacing: -0.1px; }
.url em { color: #9a9b9e; }
.share { width: 22px; height: 29px; }
.star { width: 30px; height: 29px; margin-left: 38px; }
.puzzle { width: 29px; height: 29px; margin: -3px 0 0 -6px; }
.panel { width: 28px; height: 28px; margin-left: -1px; }
.avatar {
  width: 44px;
  height: 44px;
  border-radius: 50%;
  background: #4396a8;
  display: grid;
  place-items: center;
  font-size: 22px;
  margin: 0 3px 0 -8px;
}
.dots { width: 6px; height: 26px; fill: #f1f3f4; }

.bookmarks {
  height: 66px;
  flex: none;
  display: grid;
  grid-template-columns: 216px 110px 140px 150px 152px 160px 170px 150px 150px auto;
  align-items: center;
  padding: 0 0 9px 26px;
  border-bottom: 2px solid #66676a;
  font-size: 24px;
}
.bookmarks a { display: flex; align-items: center; gap: 16px; white-space: nowrap; }
.bookmarks svg { width: 32px; height: 26px; }

/* site */
.page {
  flex: 1;
  padding: 106px 0 0 236px;
  background: linear-gradient(transparent 1460px, rgba(8,25,120,.22)) #1533e1;
  font-size: 36px;
  line-height: 54px;
  color: #fcfcfc;
}
.title-row { display: flex; }
h1 { margin: -3px 0 3px -1px; font-size: 142px; line-height: 172px; font-weight: 700; letter-spacing: -1px; width: 1139px; white-space: nowrap; }
.toggle {
  width: 48px;
  height: 120px;
  margin-top: 24px;
  border-radius: 24px;
  padding: 4px;
  background: radial-gradient(ellipse 38px 80px at 30% 64%, #ededed 0%, #e2e2e2 28%, #b4b4b4 74%, #999 100%);
  box-shadow: -14px -2px 24px -14px rgba(5,15,90,.6);
}
.toggle i { display: block; width: 40px; height: 40px; border-radius: 50%; background: linear-gradient(100deg, #e8ebfb 4%, #8d9df0 45%, #1f3ce2 92%); }
.site-nav { display: flex; gap: 41px; margin-top: 61px; font-size: 48px; line-height: 58px; font-weight: 700; }
.site-nav a { opacity: .6; letter-spacing: -0.1px; }
.site-nav .on { opacity: 1; letter-spacing: 0; }
h2 { margin: 86px 0 7px; font-size: 48px; line-height: 58px; font-weight: 700; letter-spacing: -0.45px; }
p { margin: 0 0 40px; white-space: nowrap; }
.snug { letter-spacing: -0.05px; }
.tight { letter-spacing: -0.1px; }
.last { margin-top: 43px; }
u { text-decoration-thickness: 2px; text-underline-offset: 5px; }

/* dock */
.desk { flex: 1; background: linear-gradient(#04071c, #16205c 45%, #21318f); }
.dock {
  margin: 2px 0 0 335px;
  width: 2355px;
  height: 102px;
  border: 2px solid #3e487f;
  border-radius: 32px;
  background: linear-gradient(#19225a, #1c276e);
  box-shadow: 0 0 0 1px #0a1038;
  padding: 0 3px;
  display: flex;
}
.cell { width: 84px; height: 98px; flex: none; padding: 14px 10px 0; position: relative; }
.cell > svg { width: 64px; height: 64px; }
.run::after { content: ""; display: block; width: 8px; height: 8px; border-radius: 50%; background: #99a3ea; margin: 10px auto 0; }
.rule { width: 2px; height: 74px; margin: 12px 18px 0; background: #4b5693; flex: none; }
.badge {
  position: absolute;
  left: 55px;
  top: 6px;
  width: 30px;
  height: 30px;
  border-radius: 50%;
  background: #e5503f;
  font: 400 16px/30px Inter, sans-serif;
  text-align: center;
}
.cal-month { font: 700 12px Inter, sans-serif; fill: #fff; text-anchor: middle; }
.cal-day { font: 300 39px Inter, sans-serif; fill: #222; text-anchor: middle; letter-spacing: -2px; }
.prompt { font: 700 15px "DejaVu Sans Mono", monospace; fill: #63d640; }
.bit-letter { font: 700 57px Inter, sans-serif; fill: #fff; }
.petals { isolation: isolate; }
.petals rect { mix-blend-mode: multiply; opacity: .9; }
```
